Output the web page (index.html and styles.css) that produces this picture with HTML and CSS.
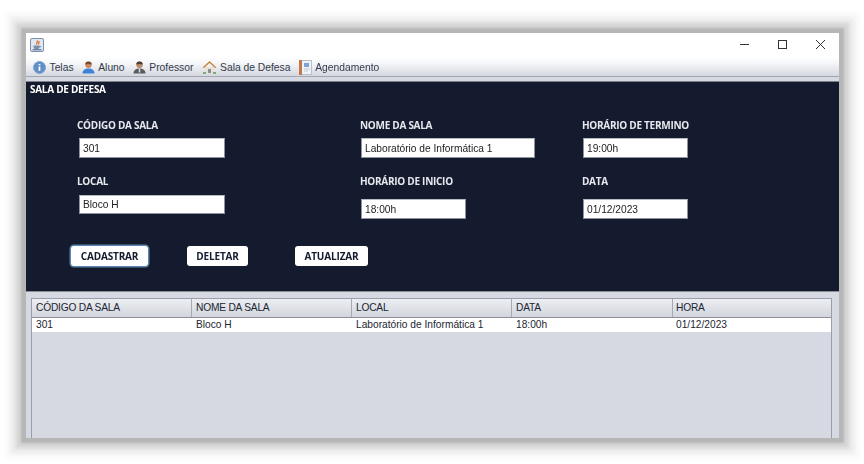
FILE: index.html
```html
<!DOCTYPE html>
<html lang="pt-BR">
<head>
  <meta charset="UTF-8">
  <title>Sala de Defesa</title>
  <link rel="stylesheet" href="styles.css">
</head>
<body>
  <div class="janela">
    <div class="titulo">
      <svg class="java" width="14" height="14" viewBox="0 0 14 14">
        <rect x="0.5" y="0.5" width="13" height="13" rx="1.5" fill="#dfe7f2" stroke="#7f8fa8"/>
        <path d="M7 2.500c1.500 1.500-1.500 2.500 0 4M8.800 3c.8 1-.8 2 .1 3.300" fill="none" stroke="#e0641e" stroke-width="1.200"/>
        <path d="M3.500 7.500h6v2a2 2 0 0 1-2 1.500h-2a2 2 0 0 1-2-1.500zM9.500 8h1.500v1.200h-1.500" fill="#7d8ea8"/>
        <path d="M2.500 11.800h9" stroke="#3f5d8a"/>
      </svg>
      <div class="controles">
        <svg width="11" height="11" viewBox="0 0 11 11"><path d="M1 5.500h9" stroke="#333"/></svg>
        <svg width="11" height="11" viewBox="0 0 11 11"><rect x="1.500" y="1.500" width="8" height="8" fill="none" stroke="#333"/></svg>
        <svg width="11" height="11" viewBox="0 0 11 11"><path d="M1 1l9 9M10 1l-9 9" stroke="#333"/></svg>
      </div>
    </div>

    <div class="menu">
      <span class="item">
        <svg width="13" height="13" viewBox="0 0 13 13">
          <circle cx="6.500" cy="6.500" r="6" fill="#5f8fc9" stroke="#7fa3cf"/>
          <path d="M6.500 3v1.300M6.500 5.500v4.200" stroke="#fff" stroke-width="1.800"/>
        </svg>
        Telas
      </span>
      <span class="item">
        <svg width="13" height="13" viewBox="0 0 13 13">
          <circle cx="6.500" cy="3.800" r="3.200" fill="#c98a62"/>
          <path d="M3.300 3.500a3.200 3 0 0 1 6.400 0c-2 -.8-4.400-.8-6.400 0z" fill="#7a4a2a"/>
          <path d="M0.500 12.500c0-3.500 2.500-5 6-5s6 1.500 6 5z" fill="#3f83d6"/>
        </svg>
        Aluno
      </span>
      <span class="item">
        <svg width="13" height="13" viewBox="0 0 13 13">
          <circle cx="6.500" cy="3.800" r="3.200" fill="#b98a6c"/>
          <path d="M3.300 3.500a3.200 3 0 0 1 6.400 0c-2 -.8-4.400-.8-6.400 0z" fill="#4a3a30"/>
          <path d="M0.500 12.500c0-3.500 2.500-5 6-5s6 1.500 6 5z" fill="#5b5b5e"/>
          <path d="M5.700 7.500h1.600v4h-1.600z" fill="#d8d8d8"/>
        </svg>
        Professor
      </span>
      <span class="item">
        <svg width="15" height="14" viewBox="0 0 15 14">
          <path d="M3 7h9v6H3z" fill="#e7e2d6"/>
          <path d="M6 9h3v4H6z" fill="#8a8f94"/>
          <path d="M0.500 7.500L7.500 1l7 6.500-1.500.5-5.500-5-5.500 5z" fill="#c8863a"/>
          <path d="M1 13h3M11 13h3" stroke="#5f9a4a" stroke-width="1.500"/>
        </svg>
        Sala de Defesa
      </span>
      <span class="item">
        <svg width="13" height="15" viewBox="0 0 13 15">
          <rect x="2.500" y="0.500" width="10" height="14" fill="#eef1f6" stroke="#b9c0cc"/>
          <rect x="0" y="0" width="3" height="15" fill="#c07a4a"/>
          <rect x="5" y="3" width="5" height="4" fill="#7da3d6"/>
          <path d="M5 9h6M5 11h4" stroke="#c3c9d4"/>
        </svg>
        Agendamento
      </span>
    </div>

    <div class="painel">
      <h1>SALA DE DEFESA</h1>
      <form class="campos">
        <div class="campo">
          <label>CÓDIGO DA SALA</label>
          <input class="m" type="text" value="301">
        </div>
        <div class="campo meio">
          <label>NOME DA SALA</label>
          <input class="g" type="text" value="Laboratório de Informática 1">
        </div>
        <div class="campo meio">
          <label>HORÁRIO DE TERMINO</label>
          <input class="p" type="text" value="19:00h">
        </div>
        <div class="campo local">
          <label>LOCAL</label>
          <input class="m" type="text" value="Bloco H">
        </div>
        <div class="campo meio baixo">
          <label>HORÁRIO DE INICIO</label>
          <input class="p" type="text" value="18:00h">
        </div>
        <div class="campo meio baixo">
          <label>DATA</label>
          <input class="p" type="text" value="01/12/2023">
        </div>
      </form>
      <div class="botoes">
        <button type="button" class="foco">CADASTRAR</button>
        <button type="button" class="deletar">DELETAR</button>
        <button type="button">ATUALIZAR</button>
      </div>
    </div>

    <div class="area">
      <div class="tabela">
        <div class="linha cabecalho">
          <span>CÓDIGO DA SALA</span>
          <span>NOME DA SALA</span>
          <span>LOCAL</span>
          <span>DATA</span>
          <span>HORA</span>
        </div>
        <div class="linha dados">
          <span>301</span>
          <span>Bloco H</span>
          <span>Laboratório de Informática 1</span>
          <span>18:00h</span>
          <span>01/12/2023</span>
        </div>
      </div>
    </div>
  </div>
</body>
</html>
```

FILE: styles.css
```css
html, body {
  height: 100%;
  margin: 0;
  overflow: hidden;
  background-color: #ffffff;
}

body {
  padding: 33px 25px 0 26px;
  box-sizing: border-box;
  font-family: "Liberation Sans", Arial, sans-serif;
}

.janela {
  height: 405px;
  display: flex;
  flex-direction: column;
  background-color: #d6d9e1;
  box-shadow: 0 0 2px 5px #b6b6b6, 0 0 3px 10px #d6d6d6, 0 0 4px 15px #ebebeb, 0 0 5px 20px #f8f8f8;
  filter: blur(0.35px);
}

.titulo {
  height: 24px;
  flex: none;
  display: flex;
  justify-content: space-between;
  align-items: center;
  padding: 0 13px 1px 4px;
  box-sizing: border-box;
  background-color: #ffffff;
}

.java {
  display: block;
}

.controles {
  display: flex;
  gap: 27px;
}

.controles svg {
  display: block;
}

.menu {
  height: 18px;
  flex: none;
  display: flex;
  align-items: center;
  gap: 8.2px;
  padding: 1px 0 0 7px;
  background: linear-gradient(#ffffff, #f4f5f8 35%, #d5d8e0);
  border-bottom: 1px solid #a3a6af;
  font-size: 10.3px;
  color: #333a4a;
}

.item {
  display: flex;
  align-items: center;
  gap: 3.5px;
}

.painel {
  height: 210px;
  flex: none;
  margin-top: 4px;
  box-sizing: border-box;
  background-color: #151b2e;
  border-top: 1px solid #7d818c;
  color: #ffffff;
}

h1 {
  margin: 0;
  padding: 1px 0 0 4px;
  height: 13px;
  font-family: "Open Sans", sans-serif;
  font-size: 10px;
  font-weight: 700;
  letter-spacing: -0.28px;
  line-height: 13px;
}

.campos {
  display: grid;
  grid-template-columns: 283px 222px 1fr;
  grid-template-rows: 56px 56px;
  padding: 22px 0 0 51px;
}

.campo label {
  display: block;
  height: 14px;
  font-family: "Open Sans", sans-serif;
  font-size: 10px;
  font-weight: 700;
  letter-spacing: -0.28px;
  line-height: 14px;
  color: #e6e8ee;
}

input {
  display: block;
  height: 20px;
  margin: 6px 0 0 2px;
  padding: 0 3px;
  box-sizing: border-box;
  border: 1px solid #8f929c;
  border-top-color: #b8bac2;
  background-color: #ffffff;
  font-family: "Liberation Sans", Arial, sans-serif;
  font-size: 10.2px;
  color: #222222;
}

input.m {
  width: 146px;
}

input.g {
  width: 174px;
}

input.p {
  width: 105px;
}

.meio input {
  margin-left: 1px;
}

.local input {
  height: 19px;
  margin-top: 7px;
}

.baixo input {
  margin-top: 11px;
}

.botoes {
  display: flex;
  gap: 39px;
  margin-left: 45px;
  padding-top: 16px;
}

button {
  height: 20px;
  padding: 0;
  border: none;
  border-radius: 3px;
  background-color: #ffffff;
  font-family: "Open Sans", sans-serif;
  font-size: 10px;
  font-weight: 700;
  letter-spacing: -0.15px;
  color: #151b2e;
}

button.foco {
  width: 77px;
  box-shadow: 0 0 0 1.5px #5d84ad;
}

button.deletar {
  width: 61px;
  margin-right: 8px;
}

button:last-child {
  width: 73px;
}

.area {
  flex: 1;
  min-height: 0;
  padding: 6px 7px 0 5px;
  border-top: 1px solid #8a8d96;
  overflow: hidden;
}

.tabela {
  height: 100%;
  box-sizing: border-box;
  border: 1px solid #9a9eaa;
  border-bottom: none;
}

.linha {
  display: grid;
  grid-template-columns: 159px 160px 160px 161px 160px;
  font-size: 10.2px;
  color: #222632;
}

.linha span {
  padding-left: 4px;
}

.linha span + span {
  border-left: 1px solid transparent;
}

.linha span:last-child {
  padding-left: 3px;
}

.cabecalho {
  height: 18px;
  line-height: 17px;
  letter-spacing: -0.2px;
  background: linear-gradient(#eceef2, #d2d5dd);
  border-bottom: 1px solid #8d909a;
}

.cabecalho span + span {
  border-left-color: #a7aab4;
}

.dados {
  height: 14px;
  line-height: 14px;
  background-color: #ffffff;
}
```
